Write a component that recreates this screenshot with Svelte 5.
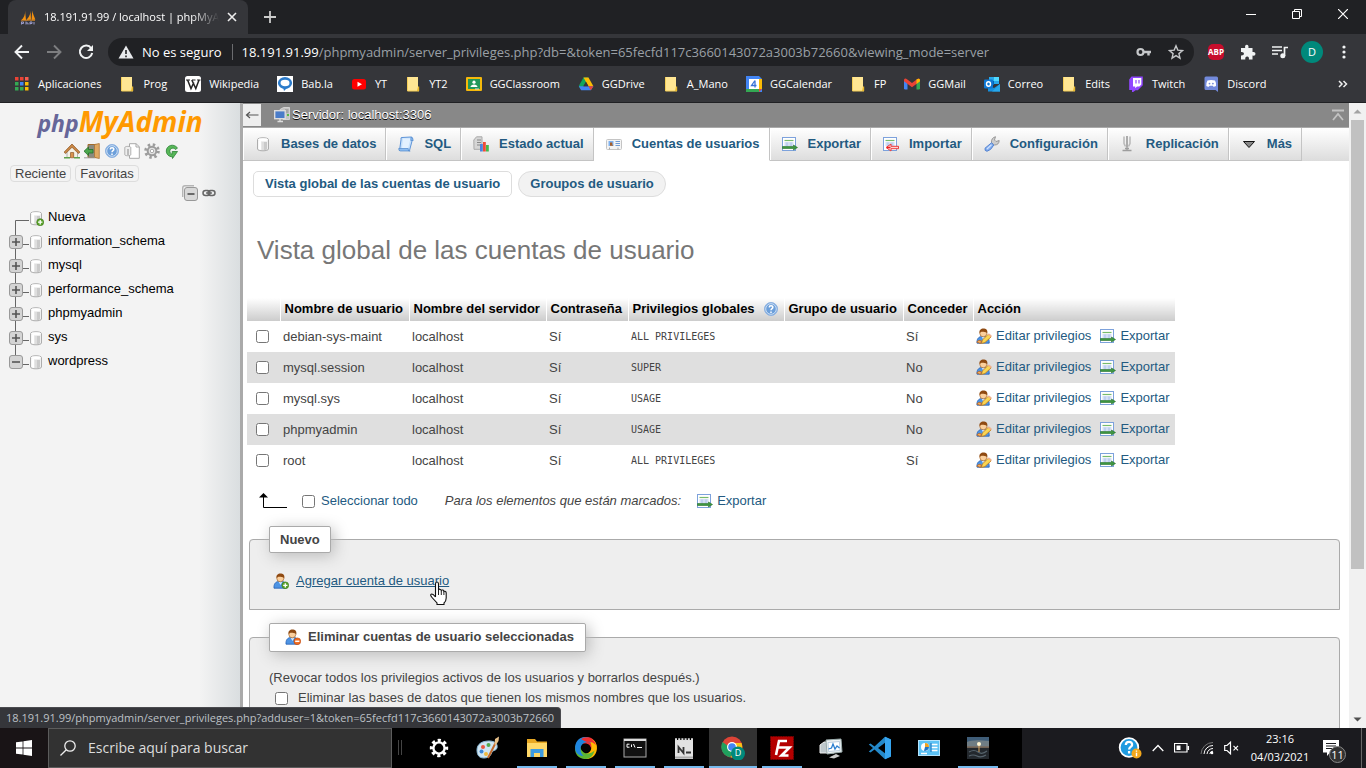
<script>
  const bookmarks = [
    ['apps', 'Aplicaciones'], ['folder', 'Prog'], ['wiki', 'Wikipedia'], ['babla', 'Bab.la'],
    ['youtube', 'YT'], ['folder', 'YT2'], ['classroom', 'GGClassroom'], ['drive', 'GGDrive'],
    ['folder', 'A_Mano'], ['calendar', 'GGCalendar'], ['folder', 'FP'], ['gmail', 'GGMail'],
    ['outlook', 'Correo'], ['folder', 'Edits'], ['twitch', 'Twitch'], ['discord', 'Discord']
  ];
  const databases = ['information_schema', 'mysql', 'performance_schema', 'phpmyadmin', 'sys', 'wordpress'];
  const tabs = [
    ['db', 'Bases de datos'], ['sql', 'SQL'], ['status', 'Estado actual'], ['users', 'Cuentas de usuarios'],
    ['export', 'Exportar'], ['import', 'Importar'], ['wrench', 'Configuración'], ['replication', 'Replicación'],
    ['more', 'Más']
  ];
  const users = [
    ['debian-sys-maint', 'ALL PRIVILEGES', 'Sí'],
    ['mysql.session', 'SUPER', 'No'],
    ['mysql.sys', 'USAGE', 'No'],
    ['phpmyadmin', 'USAGE', 'No'],
    ['root', 'ALL PRIVILEGES', 'Sí']
  ];
  const tasks = [
    ['gear', 'Configuración', false], ['paint', 'Paint', false], ['explorer', 'Explorador', true],
    ['ring', 'ShareX', true], ['cmd', 'Símbolo del sistema', true], ['notes', 'Notas', true],
    ['chrome', 'Chrome', true], ['filezilla', 'FileZilla', true], ['monitor', 'Monitor', false],
    ['vscode', 'Visual Studio Code', false], ['panel', 'Panel de control', false], ['photo', 'Imagen', true]
  ];
</script>

{#snippet person()}
  <path d="M1 15.200C.6 11 2.600 8.500 6 8.500h3c3 0 4.500 2.500 4.200 6.700z" fill="#4d94e4" stroke="#2460b4" stroke-width=".8" />
  <path d="M5.500 8.500 7.500 12l2-3.500z" fill="#d6eaff" />
  <circle cx="7.300" cy="5.300" r="3.500" fill="#fbcf9c" stroke="#a5672e" stroke-width=".7" />
  <path d="M3.600 5.200C3 2 5 .5 7.400.5S12 1.700 11.300 5.400C10.500 3.900 9 4 7.500 3.700 5.600 3.500 4.400 3.900 3.600 5.200z" fill="#8f4a12" />
{/snippet}

{#snippet cylinder()}
  <path d="M2.500 3.500C2.500 1.200 13.500 1.200 13.500 3.500v9.500c0 2.400-11 2.400-11 0z" fill="#efefef" stroke="#adadad" />
  <path d="M9 6h3v7.500c-1 .4-2 .6-3 .6z" fill="#cacaca" />
  <path d="M6.500 6H9v8H6.500z" fill="#dedede" />
  <path d="M3.500 5h2.500v8.800c-1 0-2-.3-2.500-.8z" fill="#fff" />
  <ellipse cx="8" cy="3.700" rx="4.800" ry="1.400" fill="#fff" />
{/snippet}

{#snippet sheet()}
  <rect x=".5" y="1.500" width="13" height="13" fill="#fff" stroke="#7da2dc" />
  <path d="M2.500 4.500h9" stroke="#77bb6c" stroke-width="1.200" />
  <path d="M2.500 7h9M2.500 9h9M5 6.500v4M9 6.500v4" stroke="#a9c0ea" />
{/snippet}

{#snippet icon(name)}
  <svg class="ico" viewBox="0 0 16 16" aria-hidden="true">
    {#if name === 'apps'}
      {#each ['#ea4335', '#ea4335', '#fa5c4f', '#34a853', '#4285f4', '#fbbc05', '#34a853', '#34a853', '#fbbc05'] as c, i}
        <rect x={1 + (i % 3) * 5} y={1 + Math.floor(i / 3) * 5} width="3.500" height="3.500" fill={c} />
      {/each}
    {:else if name === 'folder'}
      <path d="M2 1h11v11h1v3H2z" fill="#ffe693" /><path d="M2.500 1v14H14" fill="none" stroke="#f5cf59" />
      <path d="M13 10.500h1.200V15H12z" fill="#e9b92d" />
    {:else if name === 'wiki'}
      <rect width="16" height="16" rx="2.500" fill="#fff" />
      <path d="M1 4h4M7 4h3.500M12 4h3.500" stroke="#222" /><path d="M2.600 4 6 12.500 8.800 6.500M6.800 4l4 8.500L14 4" fill="none" stroke="#222" stroke-width="1.500" />
    {:else if name === 'babla'}
      <rect width="16" height="16" fill="#fff" /><ellipse cx="8" cy="7" rx="5.800" ry="4.600" fill="#fff" stroke="#2b7bcb" stroke-width="2.600" /><path d="M6 11l1 4 4-4z" fill="#2b7bcb" />
    {:else if name === 'youtube'}
      <rect x="1" y="3" width="14" height="10.500" rx="2.500" fill="#f00" /><path d="M6.500 5.800v5L11 8.300z" fill="#fff" />
    {:else if name === 'classroom'}
      <rect y="1" width="16" height="14" rx="1" fill="#f6b90b" /><rect x="2" y="3" width="12" height="10" fill="#21985a" />
      <circle cx="8" cy="6.200" r="1.600" fill="#fff" /><path d="M4.500 11c0-3.500 7-3.500 7 0z" fill="#fff" /><path d="M9 13h4" stroke="#ddd" />
    {:else if name === 'drive'}
      <path d="M5.500 1.500h5L8 5.800 3.200 14 .8 10z" fill="#12a65c" /><path d="M5.500 1.500h5l4.900 8.700h-5z" fill="#fbbc04" />
      <path d="M3.200 14.200.8 10.200h14.600l-2.600 4z" fill="#4285f4" /><path d="M8 5.800l2.500 4.400h-5z" fill="#35363a" /><path d="M10.500 10.200h4.900l-2.600 4z" fill="#ea4335" />
    {:else if name === 'calendar'}
      <path d="M0 0h13l3 3v13H0z" fill="#4285f4" /><path d="M13 3h3v10h-3z" fill="#fbbc04" /><path d="M0 13h13v3H0z" fill="#34a853" /><path d="M13 13h3l-3 3z" fill="#ea4335" />
      <rect x="3" y="3" width="10" height="10" fill="#fff" /><path d="M9 4.500v7M9 4.500 5.500 9.500h5" fill="none" stroke="#3973d8" stroke-width="1.300" />
    {:else if name === 'gmail'}
      <path d="M0 4h3.500v9.500H1.200Q0 13.500 0 12.300z" fill="#4285f4" /><path d="M12.500 4H16v8.300q0 1.200-1.200 1.200h-2.300z" fill="#34a853" />
      <path d="M0 3.800Q.8 1.600 3 3.200L8 7l5-3.800q2.200-1.600 3 .6v1.400L8 11.300 0 5.200z" fill="#ea4335" /><path d="M12.500 3.600Q15 1.600 16 3.800v1.500l-3.500 2.600z" fill="#fbbc04" />
    {:else if name === 'outlook'}
      <path d="M5 1h10v7H5z" fill="#28a8ea" /><path d="M10 1h5v4h-5z" fill="#50d9ff" /><path d="M5 5h5v4H5z" fill="#0364b8" /><path d="M4 9l6 3 6-4v7.500H4z" fill="#1490df" /><path d="M16 8v7.500H8z" fill="#28a8ea" />
      <rect y="3.500" width="9" height="9" rx="1" fill="#0f78d4" /><ellipse cx="4.500" cy="8" rx="2" ry="2.200" fill="none" stroke="#fff" stroke-width="1.400" />
    {:else if name === 'twitch'}
      <path d="M3.500.5h11.300v8.700l-5 5H7.500L5.200 16H4v-2H1.200V3.500z" fill="#9146ff" /><path d="M5 2h8.300v6.500l-2 2H9l-1.800 1.700v-1.700H5z" fill="#fff" /><path d="M8 4v3.500M11 4v3.500" stroke="#9146ff" stroke-width="1.200" />
    {:else if name === 'discord'}
      <path d="M3 .5h10.500Q15 .5 15 2v14l-2.500-2H3q-1.500 0-1.500-1.500V2Q1.500.5 3 .5z" fill="#7289da" /><path d="M4.500 4.500q3.500-1 7.500 0Q13.500 7 13 10q-1.500 1-2.500.8l-.7-1H6.500l-.7 1Q4.500 11 3.300 10 3 7 4.500 4.500z" fill="#fff" /><circle cx="6.500" cy="7.600" r=".9" fill="#7289da" /><circle cx="9.900" cy="7.600" r=".9" fill="#7289da" />
    {:else if name === 'sails'}
      <path d="M5 1.500C5.500 5 4 9 .8 11.500l5.200-.6zM10.500.3C11 5 8.500 9 6.300 11l4.700-.2zM12.300 1.500c.2 3 2.300 6.500 3 9.300l-3.800.2z" fill="#f29111" /><path d="M1 12q7-1.200 14-.5" stroke="#b5762a" stroke-width="1.200" fill="none" />
      <path d="M1.500 15.500v-2.500h2v1.500h-2M6 12.500v3M6 14h2v1.500M10 15.500v-2.500h2v1.500h-2M14 13v2.500" stroke="#9a9ac8" fill="none" />
    {:else if name === 'home'}
      <path d="M3 8v6.500h4V10h2.500v4.500h4V8L8 3.500z" fill="#f5f1e6" stroke="#999" stroke-width=".7" /><path d="M0 9.200 8 1l8 8.200-1.600 1.300L8 4.300l-6.400 6.200z" fill="#c98745" stroke="#8c5522" stroke-width=".7" /><path d="M6.500 9.500h3.200v5.300H6.500z" fill="#d9934e" stroke="#8c5522" stroke-width=".6" /><path d="M0 14.700h6M10 14.700h6" stroke="#5da04b" stroke-width="1.400" />
    {:else if name === 'exit'}
      <path d="M4 1.500h9v13H4z" fill="#8a8a80" stroke="#a06a2c" /><path d="M10.500 1.500 15.300.5v15l-4.800-1z" fill="#e0a963" stroke="#a66f2f" stroke-width=".7" /><path d="M0 8.200 4.500 4v2.500H9v3.500H4.500v2.600z" fill="#4aa54c" stroke="#23702b" stroke-width=".8" /><path d="M0 14.800h11" stroke="#999" />
    {:else if name === 'help'}
      <circle cx="8" cy="8" r="6.500" fill="#6c9fda" stroke="#8fb3e2" /><circle cx="8" cy="8" r="5.300" fill="none" stroke="#e6f0fb" stroke-width=".8" /><path d="M6.200 6.400C6.300 4 10 4.200 9.800 6.400 9.700 7.700 8.100 7.600 8 9.300M8 10.400V12" fill="none" stroke="#fff" stroke-width="1.500" />
    {:else if name === 'docs'}
      <path d="M5.500.7h6.500l3.300 3v11.600H5.500z" fill="#fff" stroke="#a9a9a9" /><path d="M12 .7v3.300h3.300" fill="none" stroke="#a9a9a9" /><path d="M.8 4.500c0-1.500 6-1.500 6 0v7.200c0 1.400-6 1.400-6 0z" fill="#eee" stroke="#a0a0a0" stroke-width=".8" /><path d="M4 6v6" stroke="#bbb" stroke-width="2" />
    {:else if name === 'cog'}
      <circle cx="8" cy="8" r="6.300" fill="none" stroke="#9c9c9c" stroke-width="3" stroke-dasharray="2.400 2.547" /><circle cx="8" cy="8" r="4.300" fill="#e3e3e3" stroke="#9c9c9c" stroke-width="2" /><circle cx="8" cy="8" r="1.700" fill="#fff" stroke="#999" stroke-width=".8" />
    {:else if name === 'reload'}
      <path d="M13.500 5 11.500 6.500C9.500 4 5.800 5.200 5.800 8.200c0 1.500 1 2.600 2.400 3V8.500H13.500L8.500 15.500v-1.600C4.800 13.700 2.300 11.300 2.300 8 2.300 2.500 9.500-.2 13.500 5z" fill="#58b758" stroke="#2b8136" stroke-width=".8" />
    {:else if name === 'db'}
      {@render cylinder()}
    {:else if name === 'dbnew'}
      {@render cylinder()}
      <circle cx="12.200" cy="12.200" r="3.500" fill="#5da52d" stroke="#397514" stroke-width=".6" /><path d="M10 12.200h4.400M12.200 10v4.400" stroke="#fff" stroke-width="1.300" />
    {:else if name === 'link'}
      <rect x="2" y="5.500" width="7" height="5" rx="2.500" fill="none" stroke="#666" stroke-width="1.500" /><rect x="7" y="5.500" width="7" height="5" rx="2.500" fill="none" stroke="#666" stroke-width="1.500" /><path d="M5 8h6" stroke="#666" stroke-width="1.400" />
    {:else if name === 'server'}
      <path d="M6 2.500 9.500.5H15.500v12H9z" fill="#c4c4c4" stroke="#ddd" stroke-width=".8" /><path d="M11 3h3.500M11 5h3.500" stroke="#888" /><rect x="13" y="7" width="2" height="2" fill="#58ba48" /><rect x=".7" y="3.700" width="10.500" height="8" fill="#4a7cc9" stroke="#dcdcdc" stroke-width="1.400" /><path d="M6 12v2M3.500 14.500h5.500" stroke="#ddd" stroke-width="1.300" />
    {:else if name === 'sql'}
      <path d="M4 1.500Q2.500 1 3 3.800L1.500 14.500h10l2.800-10.500V2.500q0-1.500-1.500-1.500z" fill="#c6e0fb" stroke="#5e94d8" /><path d="M5 2.500h7.500L10 12.500H4z" fill="#e3f1ff" /><path d="M.7 12.500h9.500q-.5 3 2 2.500H2.500Q.5 15 .7 12.500zM13 1q2 0 2.200 3.500h-2.400z" fill="#8cbcf0" stroke="#5289cd" stroke-width=".7" />
    {:else if name === 'status'}
      <path d="M.8 4 3.500.8H9v12.500H1z" fill="#d6d6d6" stroke="#aaa" /><path d="M4 4h4M4 6.500h4M4 9h3" stroke="#888" stroke-width="1.200" /><rect x="7" y="8" width="2.800" height="7.500" fill="#4c83df" /><rect x="10" y="6" width="2.800" height="9.500" fill="#f14c37" /><rect x="13" y="9" width="2.800" height="6.500" fill="#46b84c" />
    {:else if name === 'users'}
      <rect x=".5" y="3.500" width="15" height="10" rx="1" fill="#f4f4f4" stroke="#c4c4c4" /><rect x="2.500" y="5" width="5" height="5" fill="#7fb2f0" /><path d="M4 9.800V6.500h2.300v2l1 1.300z" fill="#a85d25" /><path d="M9.500 5.500H14M9.500 7.500H14M9.500 9.500H14" stroke="#6f9bd4" /><path d="M3.500 11.500v2M12 11.500v2" stroke="#aaa" />
    {:else if name === 'export'}
      {@render sheet()}
      <path d="M.5 10.500h11V9l4 2.500-4 2.500v-1.500H.5z" fill="#3d9640" stroke="#25702c" stroke-width=".6" />
    {:else if name === 'import'}
      {@render sheet()}
      <path d="M15.500 10.300H8V8l-5 3.500L8 15v-2.300h7.500z" fill="#fbd4d4" stroke="#ee3a3a" /><path d="M7.500 11.500H4" stroke="#e22" stroke-width="1.500" />
    {:else if name === 'wrench'}
      <path d="M9.300 8.300 7.500 6.500Q7 2 11.500.7l-1 3.300 1.500 1.500L15.200 4.500Q15 9 10.500 9z" fill="#ccc" stroke="#888" stroke-width=".8" /><path d="M7.500 6.800 9.800 9Q7 14.500 3 15.300.4 15 1 12.200z" fill="#84aeee" stroke="#4d7dcd" stroke-width=".9" /><path d="M3 13 7.500 8.800" stroke="#cfe1ff" stroke-width="1.200" />
    {:else if name === 'replication'}
      <path d="M4 .5v7l1.500 3M10 .5v7l-1.500 3" fill="none" stroke="#b8b8b8" stroke-width="1.500" /><path d="M7 0v11" stroke="#9a9a9a" stroke-width="1.600" /><path d="M7 11v3.500M2.500 14.500h9M5 12.500h4" fill="none" stroke="#9d9d9d" stroke-width="1.300" />
    {:else if name === 'more'}
      <path d="M2.500 5.500h11L8 11.500z" fill="#888" stroke="#111" />
    {:else if name === 'useredit'}
      {@render person()}
      <path d="M5.500 15.500l.8-3.500L12 6.500q2.800-.2 3 2.500L9 14.500z" fill="#f9d552" stroke="#c27a19" stroke-width=".8" /><path d="M12.300 5.800 15.300 8.300" stroke="#f1b090" stroke-width="1.700" /><path d="M.8 14q2-3 4.700-1l-1 2.500z" fill="#f3b063" stroke="#b86321" stroke-width=".8" />
    {:else if name === 'useradd'}
      {@render person()}
      <circle cx="12.300" cy="12.300" r="3.400" fill="#5da52d" stroke="#397514" stroke-width=".6" /><path d="M10.200 12.300h4.200M12.300 10.200v4.200" stroke="#fff" stroke-width="1.300" />
    {:else if name === 'userdel'}
      {@render person()}
      <circle cx="12.300" cy="12.300" r="3.400" fill="#ef6b1f" stroke="#b9440d" stroke-width=".6" /><path d="M10.200 12.300h4.200" stroke="#fff" stroke-width="1.500" />
    {/if}
  </svg>
{/snippet}

{#snippet task(name)}
  <svg class="task-ico" viewBox="0 0 24 24" aria-hidden="true">
    {#if name === 'gear'}
      <circle cx="12" cy="12" r="7.500" fill="none" stroke="#fff" stroke-width="3.400" stroke-dasharray="3.100 2.790" stroke-dashoffset="1.500" /><circle cx="12" cy="12" r="5.600" fill="none" stroke="#fff" stroke-width="2.400" />
    {:else if name === 'paint'}
      <path d="M1 14C1 8 6 5 13 5c6 0 9 3 8 7-1 3-4 2-5 4-1 3-3 6-8 6S1 19 1 14z" fill="#cfe5f3" stroke="#8dbbd8" /><circle cx="7" cy="11" r="2" fill="#e8553f" /><circle cx="12.500" cy="9" r="2" fill="#51a94e" /><circle cx="5.500" cy="15.500" r="2" fill="#3c86d8" /><circle cx="10" cy="18" r="2" fill="#f3ba3d" /><path d="M12 22 19.500 7" stroke="#c2692b" stroke-width="2" /><path d="M18.500 8.500 19 3l4-2.500-.5 4.500-2.500 4z" fill="#e9c28b" />
    {:else if name === 'explorer'}
      <path d="M2 3h8l2 2.500h10V21H2z" fill="#e8a823" /><path d="M2 7h20v14H2z" fill="#ffd868" /><path d="M5.500 21v-8h13v8h-3.500v-4H9v4z" fill="#3d9be0" />
    {:else if name === 'ring'}
      <path d="M12 1C19 .5 23.500 7 22.500 13c-.7 3.500-3 5-5.500 5 2-5-1-10.500-6-10.500C7 7.500 4 9 2 12 1 6 6 1 12 1z" fill="#f12f31" /><path d="M22.800 10C24 18 18 23.500 12 23c-4-.5-5.500-3-5.500-5.500 5 2 11-1 11-6.500 0-4-2-6-4.500-8C18 2 22 5 22.800 10z" fill="#ffb900" /><path d="M12 23C5 23.500.5 18 1.200 12 1.500 8 4 6.500 7 6.500c-2 5 1 11 6.500 11 3 0 5-1 7-3C19.500 19 16 23 12 23z" fill="#5cb632" /><path d="M1.200 13C.5 6 5 1 11 1c4 0 6 2.500 6 5.500C12 4.500 6.500 7.500 6.500 13c0 3 1 5 3 7C5 20 1.500 17 1.200 13z" fill="#1e86e0" /><path d="M7 3Q12-.5 17.500 3q3 2 4.500 6-4-4-9-3-3-1-6-3z" fill="#f12f31" /><circle cx="12" cy="12" r="4.300" fill="#050505" />
    {:else if name === 'cmd'}
      <rect x="1" y="3" width="22" height="18" fill="#111" stroke="#aaa" /><path d="M1 4h22" stroke="#ddd" stroke-width="2" /><path d="M6.500 8.200H4v3h2.500M8.500 8.500v2.500M10.500 8l1.500 3.500M14 11.500h5" stroke="#fff" fill="none" />
    {:else if name === 'notes'}
      <rect x="3" y="4" width="18" height="19" fill="#e2e2e2" /><path d="M3 3.500h18" stroke="#ddd" stroke-width="2.500" stroke-dasharray="2 1.200" /><path d="M6.500 17v-6l5 6v-6M14 16.500h5" fill="none" stroke="#333" stroke-width="1.800" /><path d="M3 21.500h18" stroke="#aaa" stroke-width="2" />
    {:else if name === 'chrome'}
      <circle cx="11" cy="11" r="10.500" fill="#dc4437" /><path d="M1.500 6A10.500 10.500 0 0 0 9 21.300l4-7z" fill="#20a05e" /><path d="M11 7h9.500A10.500 10.500 0 0 1 9.500 21.300L15.500 12z" fill="#fbc116" /><circle cx="11" cy="11" r="5" fill="#fff" /><circle cx="11" cy="11" r="3.800" fill="#4285f4" />
      <circle cx="17" cy="17.500" r="7" fill="#00897b" />
    {:else if name === 'filezilla'}
      <rect x=".5" y=".5" width="23" height="23" fill="#b40000" stroke="#7c0000" stroke-dasharray="1.500 1" /><path d="M6 19 9 5h8M7.500 11.500h7M12 11.500h7.500L11.500 19.500h7" fill="none" stroke="#fff" stroke-width="2.600" />
    {:else if name === 'monitor'}
      <path d="M1 9 5 6h10v11H1z" fill="#bfc8cc" stroke="#eee" /><path d="M7 4 22 3l1 13-15 2z" fill="#eef2f3" stroke="#9aa" /><path d="M9 6.500 20.500 5.500l.5 9-11.500 1z" fill="#fff" stroke="#bcd" /><path d="M9.500 13l3-1 1.500-4 2 5 2-3 2.500 2" fill="none" stroke="#2b7ecf" stroke-width="1.300" /><path d="M10 21.500 17 18l4 2-6 2.500z" fill="#ccc" />
    {:else if name === 'vscode'}
      <path d="M17 .8 23 3.500v17L17 23.200 6.500 13.500l-4 3L.8 15.500 5 12 .8 8.500 2.500 7.500l4 3z" fill="#2489ca" /><path d="M17 6.800v10.400L10 12z" fill="#000" /><path d="M17 .8 23 3.500v17L17 23.200z" fill="#36a5f0" />
    {:else if name === 'panel'}
      <rect x="1.500" y="4.500" width="21" height="15" fill="#5cc2f5" stroke="#b5e3fb" /><circle cx="8" cy="11" r="4" fill="#fff" /><path d="M8 11V7a4 4 0 0 1 4 4z" fill="#f0a020" /><path d="M8 11l4 0a4 4 0 0 1-5 3.800z" fill="#2276c8" /><path d="M14.500 8.500h6M14.500 11.500h6M14.500 14.500h6M4 17.500h6" stroke="#fff" stroke-width="1.500" /><path d="M14 7v9" stroke="#1d70bb" />
    {:else if name === 'photo'}
      <rect x="1" y="1" width="22" height="10" fill="#3f5d78" /><path d="M1 6q6-3 22-1v5H1z" fill="#6f7d84" /><rect x="1" y="11" width="22" height="12" fill="#23282d" /><path d="M1 11h22" stroke="#8a7560" stroke-width="1.500" /><circle cx="13" cy="8" r="2" fill="#fff4cf" /><path d="M3 16q5-3 9 0t9-1M3 20q4-2 8 0t9-1" stroke="#56636c" fill="none" stroke-width="1.200" /><path d="M13 10v6" stroke="#d9a866" />
    {/if}
  </svg>
{/snippet}

<div class="screen">
  <header class="browser">
    <div class="strip">
      <div class="tab">
        {@render icon('sails')}
        <span class="tab-title">18.191.91.99 / localhost | phpMyA</span>
        <button class="bare" aria-label="Cerrar pestaña"><svg width="10" height="10" viewBox="0 0 10 10"><path d="M1 1l8 8M9 1 1 9" stroke="#eee" stroke-width="1.600" /></svg></button>
      </div>
      <button class="bare plus" aria-label="Nueva pestaña"><svg width="12" height="12" viewBox="0 0 12 12"><path d="M6 0v12M0 6h12" stroke="#ccc" stroke-width="1.800" /></svg></button>
      <div class="window-buttons">
        <button class="bare" aria-label="Minimizar"><svg width="10" height="10" viewBox="0 0 10 10"><path d="M0 5.500h10" stroke="#fff" /></svg></button>
        <button class="bare" aria-label="Restaurar"><svg width="10" height="10" viewBox="0 0 10 10"><path d="M.5 2.500h7v7h-7zM2.500 2.500v-2h7v7h-2" fill="none" stroke="#fff" /></svg></button>
        <button class="bare" aria-label="Cerrar"><svg width="10" height="10" viewBox="0 0 10 10"><path d="M0 0l10 10M10 0 0 10" stroke="#fff" stroke-width="1.200" /></svg></button>
      </div>
    </div>
    <div class="toolbar">
      <div class="nav-buttons">
        <button class="bare" aria-label="Atrás"><svg width="16" height="16" viewBox="0 0 16 16"><path d="M15 8H2M8 1.500 1.500 8 8 14.500" fill="none" stroke="#f1f3f4" stroke-width="1.900" /></svg></button>
        <button class="bare" aria-label="Adelante"><svg width="16" height="16" viewBox="0 0 16 16"><path d="M1 8h13M8 1.500 14.500 8 8 14.500" fill="none" stroke="#7d7e80" stroke-width="1.900" /></svg></button>
        <button class="bare" aria-label="Recargar"><svg width="16" height="16" viewBox="0 0 16 16"><path d="M13.200 4.200A6.200 6.200 0 1 0 14.200 9" fill="none" stroke="#f1f3f4" stroke-width="2" /><path d="M15 1v6H9z" fill="#f1f3f4" /></svg></button>
      </div>
      <div class="address">
        <svg width="16" height="16" viewBox="0 0 16 16" aria-hidden="true"><path d="M8 1.500 15.500 14.500H.5z" fill="#e8eaed" /><path d="M8 6v4M8 11.500v1.700" stroke="#202124" stroke-width="1.600" /></svg>
        <span class="insecure">No es seguro</span>
        <span class="url"><b>18.191.91.99</b>/phpmyadmin/server_privileges.php?db=&amp;token=65fecfd117c3660143072a3003b72660&amp;viewing_mode=server</span>
        <svg width="16" height="16" viewBox="0 0 16 16" aria-hidden="true"><circle cx="4.500" cy="8" r="3" fill="none" stroke="#c6c8ca" stroke-width="2.200" /><path d="M7 8h8M12.500 8v3.500" stroke="#c6c8ca" stroke-width="2.400" /></svg>
        <svg width="16" height="16" viewBox="0 0 16 16" aria-hidden="true"><path d="M8 1.800l1.800 4.300 4.700.4-3.600 3.100 1.100 4.600L8 11.700l-4 2.500 1.100-4.600L1.500 6.500l4.700-.4z" fill="none" stroke="#c6c8ca" stroke-width="1.400" /></svg>
      </div>
      <div class="extensions">
        <span class="abp">ABP</span>
        <svg width="16" height="16" viewBox="0 0 16 16" aria-hidden="true"><path d="M1 4h4.200Q4.500 1 6.800.8 9 1 8.400 4h4.100v4q3-.5 3 1.800 0 2.400-3 1.800V15.500H8.900q.4-3-1.700-3.100-2.300 0-1.900 3.100H1v-4q3 .2 3-1.800Q4 7.700 1 8z" fill="#f1f3f4" /></svg>
        <svg width="16" height="16" viewBox="0 0 16 16" aria-hidden="true"><path d="M0 3h10M0 6.500h10M0 10h6M12.500 12V3.500h3.500" fill="none" stroke="#f1f3f4" stroke-width="1.700" /><circle cx="10.800" cy="11.800" r="2.500" fill="#f1f3f4" /></svg>
        <span class="avatar">D</span>
        <button class="bare" aria-label="Menú"><svg width="16" height="16" viewBox="0 0 16 16"><g fill="#f1f3f4"><circle cx="8" cy="3" r="1.600" /><circle cx="8" cy="8" r="1.600" /><circle cx="8" cy="13" r="1.600" /></g></svg></button>
      </div>
    </div>
    <nav class="bookmarks">
      {#each bookmarks as [ic, label]}
        <a href="#top">{@render icon(ic)}{label}</a>
      {/each}
      <button class="bare chev" aria-label="Más marcadores"><svg width="10" height="8" viewBox="0 0 10 8"><path d="M1 1l3 3-3 3M5.500 1l3 3-3 3" fill="none" stroke="#eee" stroke-width="1.500" /></svg></button>
    </nav>
  </header>

  <div class="page">
    <aside>
      <div class="logo"><span>php</span>MyAdmin</div>
      <div class="quick">
        {#each ['home', 'exit', 'help', 'docs', 'cog', 'reload'] as n}{@render icon(n)}{/each}
      </div>
      <div class="lists"><button>Reciente</button><button>Favoritas</button></div>
      <div class="tree-tools">
        <svg width="16" height="16" viewBox="0 0 16 16" aria-hidden="true"><path d="M.7 12V3Q.7.700 3 .7h9" fill="none" stroke="#b5b5b5" stroke-width="1.400" /><rect x="2.500" y="2.500" width="13" height="13" rx="2.500" fill="#d8d8d8" stroke="#999" /><path d="M5.500 9h7" stroke="#555" stroke-width="1.700" /></svg>
        {@render icon('link')}
      </div>
      <ul class="tree">
        <li>
          <svg class="branch" viewBox="0 0 20 24" aria-hidden="true"><path d="M20 15.500H6.500V24" fill="none" stroke="#666" /></svg>
          {@render icon('dbnew')}<a href="#top">Nueva</a>
        </li>
        {#each databases as db, i}
          <li>
            <svg class="branch" viewBox="0 0 20 24" aria-hidden="true">
              <path d={i < databases.length - 1 ? 'M6.500 0v24M13 15.500h7' : 'M6.500 0v13M13 15.500h7'} stroke="#666" />
              <rect x=".5" y="6.500" width="13" height="13" rx="2.500" fill="#d4d4d4" stroke="#999" />
              <path d={i < databases.length - 1 ? 'M3 13h8M7 9v8' : 'M3 13h8'} stroke="#555" stroke-width="1.600" />
            </svg>
            {@render icon('db')}<a href="#top">{db}</a>
          </li>
        {/each}
      </ul>
    </aside>

    <main>
      <div class="serverinfo">
        <button aria-label="Ocultar panel"><svg width="14" height="10" viewBox="0 0 14 10"><path d="M13.500 5H2M5 2 1.500 5 5 8" fill="none" stroke="#555" stroke-width="1.200" /></svg></button>
        {@render icon('server')}
        <span>Servidor: localhost:3306</span>
        <svg class="lift" width="14" height="12" viewBox="0 0 14 12" aria-hidden="true"><path d="M1 1.500h12M2 11l5-6 5 6" fill="none" stroke="#c2c2c2" stroke-width="1.800" /></svg>
      </div>
      <nav class="topmenu">
        {#each tabs as [ic, label]}
          <a href="#top" class:active={ic === 'users'}>{@render icon(ic)}{label}</a>
        {/each}
      </nav>
      <nav class="submenu">
        <a href="#top" class="current">Vista global de las cuentas de usuario</a>
        <a href="#top">Groupos de usuario</a>
      </nav>
      <h2>Vista global de las cuentas de usuario</h2>

      <table>
        <thead>
          <tr>
            <th class="c-check"></th><th class="c-name">Nombre de usuario</th><th class="c-host">Nombre del servidor</th><th class="c-pass">Contraseña</th>
            <th class="c-priv"><span class="with-help">Privilegios globales {@render icon('help')}</span></th>
            <th class="c-group">Grupo de usuario</th><th class="c-grant">Conceder</th><th>Acción</th>
          </tr>
        </thead>
        <tbody>
          {#each users as [name, priv, grant]}
            <tr>
              <td class="check"><input type="checkbox" id={'u-' + name} aria-label={name} /></td>
              <td><label for={'u-' + name}>{name}</label></td>
              <td>localhost</td>
              <td>Sí</td>
              <td><code>{priv}</code></td>
              <td></td>
              <td>{grant}</td>
              <td>
                <div class="actions">
                  <a href="#top">{@render icon('useredit')}Editar privilegios</a>
                  <a href="#top">{@render icon('export')}Exportar</a>
                </div>
              </td>
            </tr>
          {/each}
        </tbody>
      </table>

      <div class="bulk">
        <svg width="30" height="18" viewBox="0 0 30 18" aria-hidden="true"><path d="M5.500 3v12.500H29" fill="none" stroke="#000" /><path d="M5.500 1 10 5.500H1z" fill="#000" /></svg>
        <label class="all"><input type="checkbox" />Seleccionar todo</label>
        <em>Para los elementos que están marcados:</em>
        <a href="#top">{@render icon('export')}Exportar</a>
      </div>

      <fieldset class="add">
        <legend>Nuevo</legend>
        <a href="#top">{@render icon('useradd')}<span>Agregar cuenta de usuario</span></a>
        <svg class="hand" width="19" height="25" viewBox="0 0 19 25" aria-hidden="true"><path d="M6.500 16V3q0-2 1.500-2t1.500 2v6q.5-1 1.500-.8 1 .1 1.300 1.300.6-.8 1.600-.4 1 .4 1 1.400.8-.6 1.600 0 .7.500.7 1.500v5q0 3-2.200 5v1.500H8V22L3 16.500Q.8 14 2.200 13.200q1.600-.8 4.300 2.800" fill="#fff" stroke="#111" stroke-width="1.100" /><path d="M9.500 9v5M12.300 9.500V14M14.900 10.500V14" stroke="#222" /></svg>
      </fieldset>

      <fieldset class="remove">
        <legend><span>{@render icon('userdel')}Eliminar cuentas de usuario seleccionadas</span></legend>
        <p>(Revocar todos los privilegios activos de los usuarios y borrarlos después.)</p>
        <label><input type="checkbox" />Eliminar las bases de datos que tienen los mismos nombres que los usuarios.</label>
      </fieldset>
    </main>

    <div class="scrollbar" aria-hidden="true">
      <svg viewBox="0 0 17 17"><path d="M4.500 10.500 8.500 6.500l4 4z" fill="#a3a3a3" /></svg>
      <div class="track"><div class="thumb"></div></div>
      <svg viewBox="0 0 17 17"><path d="M4.500 6.500l4 4 4-4z" fill="#505050" /></svg>
    </div>
    <div class="status">18.191.91.99/phpmyadmin/server_privileges.php?adduser=1&amp;token=65fecfd117c3660143072a3003b72660</div>
  </div>

  <footer>
    <button class="start" aria-label="Inicio"><svg width="16" height="16" viewBox="0 0 16 16"><path d="M0 2.300 6.600 1.400v6.200H0zM7.400 1.300 16 0v7.600H7.400zM0 8.400h6.600v6.200L0 13.700zM7.400 8.400H16V16l-8.600-1.300z" fill="#fff" /></svg></button>
    <label class="search">
      <svg width="16" height="16" viewBox="0 0 16 16" aria-hidden="true"><circle cx="10" cy="6" r="5.200" fill="none" stroke="#eee" stroke-width="1.300" /><path d="M6.300 9.700.5 15.500" stroke="#eee" stroke-width="1.300" /></svg>
      <input type="text" placeholder="Escribe aquí para buscar" aria-label="Buscar" />
    </label>
    <span class="grip"></span>
    <div class="tasks">
      {#each tasks as [ic, label, open]}
        <button class:open class:focused={ic === 'chrome'} aria-label={label}>
          {@render task(ic)}
          {#if ic === 'chrome'}<span class="badge">D</span>{/if}
        </button>
      {/each}
    </div>
    <div class="tray">
      <svg width="24" height="24" viewBox="0 0 24 24" aria-hidden="true"><circle cx="11" cy="11.500" r="9.300" fill="#1e9be0" stroke="#fff" stroke-width="1.800" /><path d="M7.800 9c.2-4.500 6.700-4 6.300-.2-.2 2.200-3 2.200-3 4.700M11.100 15v2.500" fill="none" stroke="#fff" stroke-width="2.300" /><circle cx="18.500" cy="17.500" r="5" fill="#f4a81c" /><path d="M18.500 14.500v1.300M18.500 16.800v3.500" stroke="#fff" stroke-width="1.400" /></svg>
      <svg width="12" height="8" viewBox="0 0 12 8" aria-hidden="true"><path d="M.7 7 6 1.500 11.300 7" fill="none" stroke="#fff" stroke-width="1.300" /></svg>
      <svg width="16" height="10" viewBox="0 0 16 10" aria-hidden="true"><path d="M.5.5h12.500v8.500H.5z" fill="none" stroke="#fff" stroke-width="1.200" /><path d="M2.500 2.500h4v4.500h-4z" fill="#fff" /><path d="M14.300 3v4" stroke="#fff" stroke-width="1.500" /></svg>
      <svg width="14" height="14" viewBox="0 0 14 14" aria-hidden="true"><path d="M1 13A12 12 0 0 1 13 1.500" fill="none" stroke="#777" /><path d="M4 13A9 9 0 0 1 13 4.500M7 13A6 6 0 0 1 13 7.500M9.800 13A3.200 3.200 0 0 1 13 10.200" fill="none" stroke="#fff" /><circle cx="12" cy="12" r="1.300" fill="#fff" /></svg>
      <svg width="16" height="14" viewBox="0 0 16 14" aria-hidden="true"><path d="M.7 4.500H3L6.500 1.200v11.600L3 9.500H.7z" fill="none" stroke="#fff" stroke-width="1.200" /><path d="M9.500 4.800 14 9.300M14 4.800 9.500 9.300" stroke="#fff" stroke-width="1.200" /></svg>
      <div class="clock"><span>23:16</span><span>04/03/2021</span></div>
      <div class="notice">
        <svg width="18" height="16" viewBox="0 0 18 16" aria-hidden="true"><path d="M1 0h16v12.500H8L5 16v-3.500H1z" fill="#fff" /><path d="M4 3.500h10M4 6h10M4 8.500h6" stroke="#1b1b1f" /></svg>
        <span>11</span>
      </div>
    </div>
    <span class="peek"></span>
  </footer>
</div>

<style>
  :global(body) { margin: 0; overflow: hidden; }
  .screen { display: flex; flex-direction: column; height: 100vh; overflow: hidden; font: 11px/16px "Open Sans", "Noto Sans", sans-serif; }
  .screen * { box-sizing: border-box; }
  a { color: #235a81; text-decoration: none; }
  svg { display: block; flex: none; }
  .ico { width: 16px; height: 16px; }
  button { font: inherit; }
  .bare { display: flex; align-items: center; justify-content: center; padding: 0; border: 0; background: none; }

  .browser { flex: none; background: #35363a; color: #fff; border-bottom: 1px solid #202124; }
  .strip { display: flex; height: 34px; background: #202124; }
  .tab { display: flex; align-items: center; width: 240px; margin-left: 8px; padding: 0 11px 0 12px; gap: 8px; background: #35363a; border-radius: 8px 8px 0 0; }
  .tab-title { flex: 1; white-space: nowrap; -webkit-mask-image: linear-gradient(to right, #000 84%, transparent); mask-image: linear-gradient(to right, #000 84%, transparent); }
  .plus { margin-left: 16px; }
  .window-buttons { display: flex; margin-left: auto; }
  .window-buttons .bare { width: 46px; height: 28px; }
  .toolbar { display: flex; align-items: center; height: 36px; padding: 0 14px; }
  .nav-buttons { display: flex; gap: 16px; width: 94px; }
  .address { flex: 1; display: flex; align-items: center; height: 28px; padding: 0 10px; border-radius: 14px; background: #202124; font-size: 13px; gap: 16px; }
  .insecure { margin-left: -8px; padding-right: 10px; border-right: 1px solid #6b6c6f; margin-right: -7px; line-height: 16px; }
  .url { flex: 1; color: #9aa0a6; white-space: nowrap; overflow: hidden; }
  .url b { color: #fff; font-weight: 400; }
  .extensions { display: flex; align-items: center; gap: 16px; padding-left: 14px; }
  .abp { width: 16px; height: 16px; border-radius: 5px; background: #c70d2c; font-size: 8px; font-weight: 700; text-align: center; }
  .avatar { width: 22px; height: 22px; border-radius: 50%; background: #00897b; line-height: 22px; text-align: center; margin: 0 -3px; }
  .bookmarks { display: flex; align-items: center; height: 32px; padding: 0 18px 4px 14px; gap: 18px; white-space: nowrap; }
  .bookmarks a { display: flex; align-items: center; gap: 8px; color: #fff; }
  .chev { margin-left: auto; }

  .page { position: relative; flex: 1; display: flex; min-height: 0; overflow: hidden; background: #fff; font: 13px/16px "Liberation Sans", Arial, sans-serif; color: #444; }
  aside { flex: none; width: 243px; border-right: 3px solid #aaa; background: linear-gradient(to right, #f3f3f3 200px, #dadee0 240px); }
  .logo { padding-top: 1px; text-align: center; font: italic 700 28px/34px "Open Sans", sans-serif; color: #f90; }
  .logo span { color: #669; font-size: 23px; }
  .quick { display: flex; gap: 4px; padding: 3px 0 6px 64px; }
  .lists { display: flex; gap: 4px; padding-left: 10px; }
  .lists button { padding: 0 4px; border: 1px solid #ddd; border-radius: 4px; background: #f3f3f3; color: #444; line-height: 15px; }
  .tree-tools { display: flex; gap: 3px; padding: 3px 0 0 182px; }
  .tree { list-style: none; margin: 4px 0 0; padding: 0 0 0 9px; }
  .tree li { display: flex; height: 24px; }
  .tree a { color: #000; line-height: 24px; padding-left: 4px; }
  .tree .ico { margin: 5px 0 0 -1px; }
  .branch { width: 20px; height: 24px; }

  main { flex: 1; min-width: 0; overflow: hidden; }
  .serverinfo { display: flex; align-items: center; height: 25px; padding: 1px 4px 1px 0; background: #888; border-bottom: 1px solid #aaa; color: #fff; text-shadow: 0 1px 0 #000; }
  .serverinfo button { width: 18px; height: 22px; padding: 0 2px; border: 0; background: #eee; }
  .serverinfo .ico { margin: 0 2px 0 13px; }
  .lift { margin-left: auto; }
  .topmenu { display: flex; height: 33px; background: linear-gradient(#fff, #dcdcdc); }
  .topmenu a { display: flex; align-items: center; gap: 10px; padding: 0 9px 0 12px; border-right: 1px solid #c4c4c4; border-bottom: 1px solid #c4c4c4; font-weight: 700; box-shadow: inset 1px 0 0 #fff; white-space: nowrap; }
  .topmenu .active { background: #fff; border-bottom-color: #fff; }
  .submenu { display: flex; gap: 6px; padding: 10px; font-weight: 700; }
  .submenu a { padding: 4px 11px; border: 1px solid #ddd; border-radius: 20px; background: #f2f2f2; }
  .submenu .current { border-radius: 5px; background: #fff; }
  h2 { margin: 27px 14px 32px; font: 400 26px/32px "Liberation Sans", Arial, sans-serif; color: #777; }

  table { width: 928px; margin-left: 4px; border-collapse: collapse; table-layout: fixed; }
  th { height: 23px; padding: 0 0 2px 4px; border-right: 1px solid #fff; background: linear-gradient(#fff, #ccc); color: #000; text-align: left; white-space: nowrap; }
  th:last-child { border-right: 0; }
  td { height: 31px; padding: 0 0 0 3px; }
  tbody tr:nth-child(even) { background: #dfdfdf; }
  .c-check { width: 33px; }
  .c-name { width: 129px; }
  .c-host { width: 137px; }
  .c-pass { width: 82px; }
  .c-priv { width: 156px; }
  .c-group { width: 119px; }
  .c-grant { width: 70px; }
  .with-help { display: flex; align-items: center; gap: 8px; }
  .check { padding-left: 9px; }
  input[type="checkbox"] { display: block; width: 13px; height: 13px; margin: 0; }
  code { font: 10px/16px "DejaVu Sans Mono", monospace; }
  .actions { display: flex; gap: 9px; padding-bottom: 1px; }
  .actions a, .bulk a { display: flex; gap: 4px; white-space: nowrap; }
  .bulk { display: flex; align-items: center; margin: 16px 0 16px 15px; white-space: nowrap; }
  .bulk a { margin-left: 16px; }
  .all { display: flex; align-items: center; gap: 6px; margin: 0 27px 0 14px; color: #235a81; }

  fieldset { position: relative; margin: 0 9px 13px 6px; padding: 0 19px; border: 1px solid #aaa; border-radius: 4px 4px 0 0; background: #eee; min-width: 0; }
  legend { padding: 5px 10px; border: 1px solid #aaa; border-radius: 2px; background: #fff; font-weight: 700; line-height: 15px; box-shadow: 3px 3px 15px #bbb; }
  .add a { display: inline-flex; gap: 7px; margin: 20px 0; text-decoration: none; }
  .add a { margin-left: 4px; }
  .add a span { text-decoration: underline; }
  .hand { position: absolute; left: 179px; top: 28px; }
  .remove legend { padding: 5px 11px 6px 15px; }
  .remove legend span { display: flex; align-items: center; gap: 7px; line-height: 16px; }
  .remove p { margin: 18px 0 4px; }
  .remove label { display: flex; align-items: center; gap: 10px; margin: 0 0 60px 6px; }

  .scrollbar { display: flex; flex-direction: column; width: 17px; flex: none; background: #f1f1f1; }
  .track { flex: 1; padding: 0 2px; }
  .thumb { height: 76%; background: #c1c1c1; }
  .status { position: absolute; left: 0; bottom: 0; padding: 2px 6px; border-radius: 0 4px 0 0; border-top: 1px solid #4a4b4f; border-right: 1px solid #4a4b4f; background: #35363a; color: #bdc1c6; font: 11px/16px "Open Sans", sans-serif; }

  footer { flex: none; display: flex; height: 40px; background: #000; color: #fff; }
  .start { display: flex; align-items: center; justify-content: center; width: 48px; padding: 0; border: 0; background: #191416; }
  .search { display: flex; align-items: center; gap: 12px; width: 344px; padding-left: 11px; border: 1px solid #5c5c5c; background: #323232; }
  .search input { flex: 1; min-width: 0; padding: 0; border: 0; outline: 0; background: none; font: 14px/20px "Open Sans", sans-serif; color: #ddd; }
  .search input::placeholder { color: #ddd; opacity: 1; }
  .grip { width: 4px; height: 15px; margin: 12px 13px 0 6px; border: solid #444; border-width: 0 1px; }
  .tasks { display: flex; gap: 1px; }
  .tasks button { position: relative; display: flex; align-items: center; justify-content: center; width: 48px; padding: 0; border: 0; background: none; }
  .task-ico { width: 24px; height: 24px; }
  .tasks .focused { background: #333; }
  .tasks .open::after { content: ""; position: absolute; left: 4px; right: 4px; bottom: 0; height: 2px; background: #76b9ed; }
  .tasks .focused::after { left: 0; right: 0; }
  .badge { position: absolute; left: 22px; top: 18px; width: 14px; font-size: 9px; line-height: 14px; text-align: center; color: #fff; }
  .tasks .badge { left: 50%; margin-left: -2px; }
  .tray { display: flex; align-items: center; margin-left: auto; padding: 0 15px 0 96px; gap: 10px; background: #1b1b1f; }
  .clock { display: flex; flex-direction: column; align-items: center; line-height: 18px; width: 60px; }
  .notice { position: relative; padding-right: 6px; margin-left: 2px; }
  .notice span { position: absolute; left: 7px; top: 6px; width: 17px; height: 17px; border: 1px solid #888; border-radius: 50%; background: #333; line-height: 15px; text-align: center; }
  .peek { width: 5px; border-left: 1px solid #666; background: #1b1b1f; }
</style>
